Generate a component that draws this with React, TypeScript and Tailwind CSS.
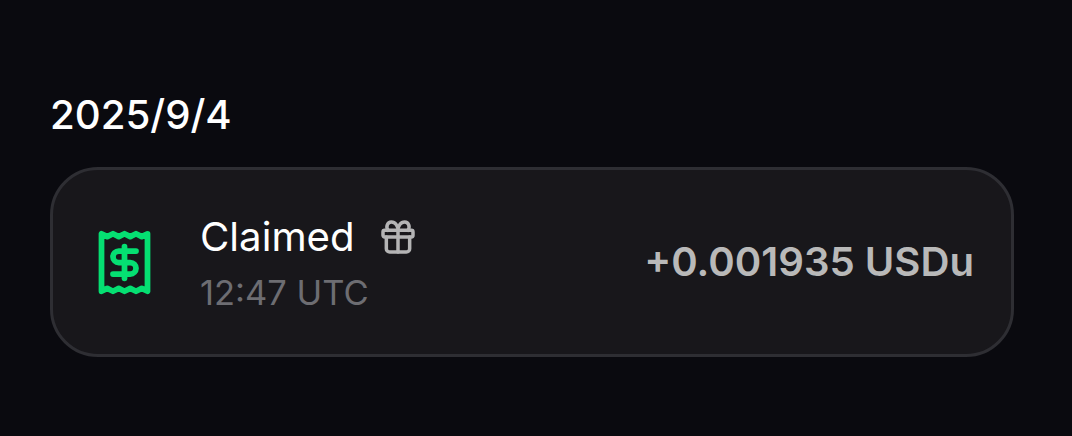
import { Receipt } from 'lucide-react';

function GiftIcon() {
  return (
    <svg
      className="size-[40px] shrink-0 text-[#b4b4b5]"
      viewBox="0 0 24 24"
      fill="none"
      stroke="currentColor"
      strokeWidth="2.1"
      strokeLinecap="round"
      strokeLinejoin="round"
    >
      <rect x="3" y="8" width="18" height="4" rx="1" />
      <path d="M12 8v13" />
      <path d="M19 12v7a2 2 0 0 1-2 2H7a2 2 0 0 1-2-2v-7" />
      <path d="M6 8C4.600 6 5.600 3 8 3C10.400 3 12 5.300 12 8C12 5.300 13.600 3 16 3C18.400 3 19.400 6 18 8" />
    </svg>
  );
}

interface TransactionProps {
  title: string;
  time: string;
  amount: string;
}

function Transaction({ title, time, amount }: TransactionProps) {
  return (
    <div className="flex items-center h-[190px] px-[37px] rounded-[48px] border-3 border-[#2e2e33] bg-[#18171b]">
      <Receipt className="size-[69px] mt-px shrink-0 text-[#05df72]" />
      <div className="ml-[41px] pt-[5px] grow">
        <div className="flex items-center gap-[23px]">
          <span className="text-[40.2px] leading-[56px] text-white">{title}</span>
          <GiftIcon />
        </div>
        <div className="text-[34.5px] leading-[56px] text-[#6d6d72]">{time}</div>
      </div>
      <div className="text-[40.15px] font-semibold text-[#b9b9b9]">{amount}</div>
    </div>
  );
}

export default function App() {
  return (
    <div className="h-[436px] bg-[#0a0a0f] pl-[50px] pr-[58px] pt-[87px] font-['Inter',sans-serif]">
      <h2 className="text-[40.2px] leading-[56px] font-medium text-white">2025/9/4</h2>
      <div className="mt-[24px]">
        <Transaction title="Claimed" time="12:47 UTC" amount="+0.001935 USDu" />
      </div>
    </div>
  );
}
